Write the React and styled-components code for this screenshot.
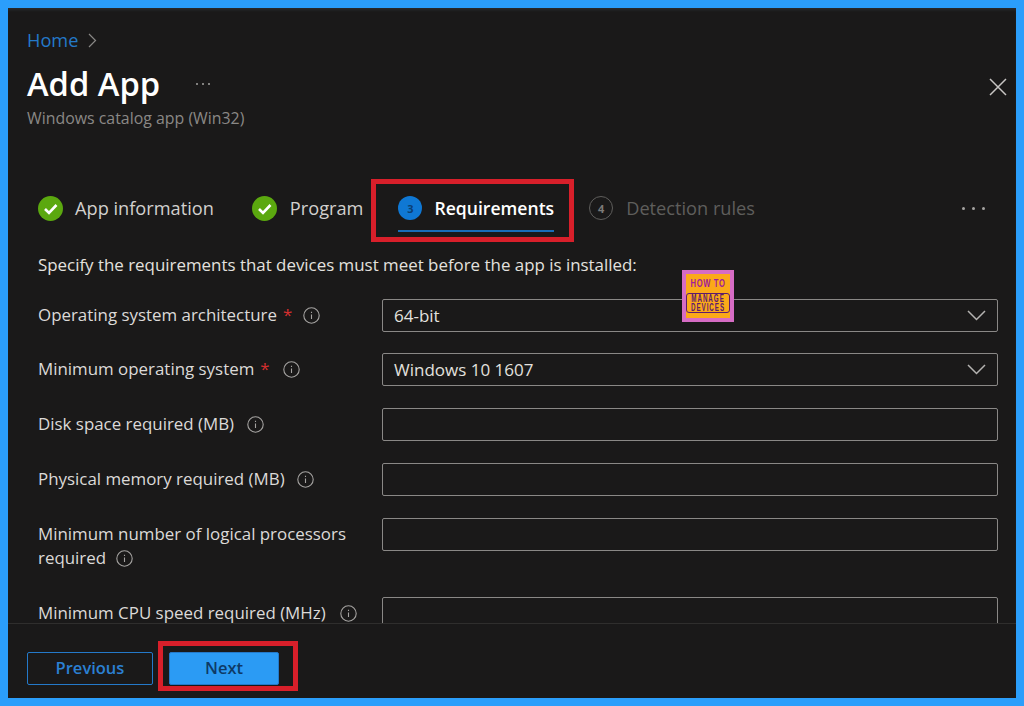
import styled, { createGlobalStyle } from "styled-components";

const GlobalStyle = createGlobalStyle`
  html, body {
    margin: 0;
    padding: 0;
    background: #2b9efb;
  }
  * {
    box-sizing: border-box;
  }
`;

const Frame = styled.div`
  width: 1024px;
  height: 706px;
  padding: 8px;
  background: #2b9efb;
  font-family: "Open Sans", "Noto Sans", sans-serif;
`;

const Panel = styled.div`
  position: relative;
  display: flex;
  flex-direction: column;
  height: 100%;
  background: #1a1919;
  box-shadow: inset 0 3px 3px -1px #2a2c2e;
  overflow: hidden;
`;

const Header = styled.header`
  position: relative;
  padding: 19px 19px 0;
`;

const Crumb = styled.div`
  display: flex;
  align-items: center;
  gap: 10px;
  height: 26px;
  font-size: 18.2px;
  color: #2479c9;
`;

const TitleRow = styled.div`
  display: flex;
  align-items: center;
  gap: 36px;
  margin-top: 8px;
  height: 46px;
`;

const Title = styled.h1`
  margin: 0;
  font-size: 32.7px;
  font-weight: 600;
  color: #fff;
  line-height: 46px;
`;

const Dots = styled.span`
  display: flex;
  gap: ${(props) => props.$gap}px;
`;

const Dot = styled.i`
  display: block;
  width: ${(props) => props.$size}px;
  height: ${(props) => props.$size}px;
  border-radius: 50%;
  background: #a5a3a1;
`;

const Subtitle = styled.div`
  font-size: 15.9px;
  line-height: 20px;
  margin-top: 1px;
  color: #8a8886;
`;

const CloseButton = styled.button`
  position: absolute;
  top: 70px;
  right: 9px;
  display: flex;
  padding: 0;
  border: 0;
  background: none;
`;

const Tabs = styled.nav`
  display: flex;
  align-items: flex-start;
  height: 57px;
  margin-top: 67px;
  padding: 0 31px 0 30px;
`;

const Tab = styled.div`
  position: relative;
  display: flex;
  align-items: center;
  gap: ${(props) => props.$gap}px;
  height: 26px;
  margin-right: ${(props) => props.$after}px;
  font-size: ${(props) => (props.$active ? 17.6 : 18.2)}px;
  font-weight: ${(props) => (props.$active ? 600 : 400)};
  color: ${(props) => props.$color};
  white-space: nowrap;
`;

const Underline = styled.span`
  position: absolute;
  left: 0;
  right: 0;
  bottom: -11px;
  height: 2px;
  background: #1a6db8;
`;

const Callout = styled.span`
  position: absolute;
  border: 5px solid #d81f2a;
  top: ${(props) => props.$top}px;
  left: ${(props) => props.$left}px;
  width: ${(props) => props.$width}px;
  height: ${(props) => props.$height}px;
  pointer-events: none;
`;

const StepBadge = styled.span`
  display: flex;
  align-items: center;
  justify-content: center;
  width: 24px;
  height: 24px;
  border-radius: 50%;
  font-size: 11px;
  font-weight: 700;
  background: ${(props) => (props.$current ? "#0f78d4" : "transparent")};
  border: ${(props) => (props.$current ? "0" : "1.5px solid #5f5e5c")};
  color: ${(props) => (props.$current ? "#0b3f73" : "#7d7b79")};
`;

const MoreTabs = styled.div`
  margin-left: auto;
  display: flex;
  height: 26px;
  align-items: center;
`;

const Body = styled.main`
  position: relative;
  flex: 1;
  min-height: 0;
  overflow: hidden;
  padding: 0 18px 0 30px;
`;

const Intro = styled.p`
  margin: 0 0 21px;
  height: 26px;
  font-size: 16.9px;
  line-height: 26px;
  color: #e3e1df;
  white-space: nowrap;
`;

const Row = styled.div`
  display: grid;
  grid-template-columns: 344px 1fr;
  min-height: 33px;
  margin-bottom: ${(props) => props.$gap}px;
`;

const Label = styled.label`
  font-size: 16.9px;
  line-height: ${(props) => (props.$tall ? 24 : 20)}px;
  padding-top: ${(props) => (props.$tall ? 4 : 6)}px;
  color: #dcdad8;
`;

const Star = styled.span`
  color: #d32f2f;
  margin-left: 6px;
`;

const InfoIcon = styled.svg`
  width: 17px;
  height: 17px;
  margin-left: ${(props) => props.$offset}px;
  vertical-align: -3px;
`;

const Field = styled.div`
  display: flex;
  align-items: center;
  justify-content: space-between;
  height: 33px;
  padding: 0 11px;
  border: 1px solid #8a8886;
  border-radius: 2px;
  font-size: 17px;
  color: #e3e1df;
`;

const Footer = styled.footer`
  position: relative;
  display: flex;
  gap: 16px;
  height: 75px;
  padding: 28px 19px 0;
  border-top: 1px solid #2f2e2d;
  background: #1a1919;
`;

const Button = styled.button`
  position: relative;
  width: ${(props) => props.$width}px;
  height: 33px;
  padding: 0 0 2px;
  border-radius: 2px;
  font-family: inherit;
  font-size: 16.5px;
  font-weight: 600;
  border: 1px solid #2479c9;
  background: ${(props) => (props.$primary ? "#2b9bf4" : "transparent")};
  color: ${(props) => (props.$primary ? "#0e3a66" : "#2b80d3")};
`;

const Badge = styled.div`
  position: absolute;
  top: 262px;
  left: 674px;
  width: 52px;
  height: 52px;
  padding-top: 3px;
  border: 4px solid #d66cc4;
  background: #fba919;
  font-family: "Liberation Sans", sans-serif;
  color: #a01c9b;
  white-space: nowrap;
`;

const BadgeTop = styled.div`
  display: flex;
  justify-content: center;
  font-size: 11.5px;
  font-weight: 700;
  line-height: 12px;
  letter-spacing: 1px;
  transform: scaleX(0.66);
`;

const BadgeBottom = styled.div`
  height: 20px;
  margin-top: 4px;
  border: 1px solid #5d1a6e;
  border-radius: 3px;
  font-size: 10px;
  font-weight: 700;
  line-height: 9px;
  letter-spacing: 1.6px;
  color: #5d1a6e;
`;

const BadgeLine = styled.div`
  display: flex;
  justify-content: center;
  transform: scaleX(0.62);
`;

const CheckBadge = () => (
  <svg width="25" height="25" viewBox="0 0 25 25">
    <circle cx="12.5" cy="12.5" r="12.5" fill="#5ba80f" />
    <path d="M7 13l4 4 7.5-8" fill="none" stroke="#fff" strokeWidth="2.6" />
  </svg>
);

const Info = ({ offset }) => (
  <InfoIcon $offset={offset} viewBox="0 0 17 17">
    <circle cx="8.5" cy="8.5" r="7.7" fill="none" stroke="#a5a3a1" strokeWidth="1.1" />
    <path d="M8.5 7.5v4.6M8.5 4.7v1.2" stroke="#a5a3a1" strokeWidth="1.1" />
  </InfoIcon>
);

const Chevron = () => (
  <svg width="19" height="11" viewBox="0 0 19 11">
    <path d="M1 1l8.5 8.5L18 1" fill="none" stroke="#b5b3b1" strokeWidth="1.5" />
  </svg>
);

const rows = [
  { label: "Operating system architecture", required: true, info: 11, value: "64-bit", select: true, gap: 21 },
  { label: "Minimum operating system", required: true, info: 13, value: "Windows 10 1607", select: true, gap: 22 },
  { label: "Disk space required (MB)", info: 13, gap: 22 },
  { label: "Physical memory required (MB)", info: 12, gap: 22 },
  { label: "Minimum number of logical processors required", info: 10, tall: true, gap: 27 },
  { label: "Minimum CPU speed required (MHz)", info: 14, gap: 0 },
];

export default function App() {
  return (
    <>
      <GlobalStyle />
      <Frame>
        <Panel>
          <Header>
            <Crumb>
              Home
              <svg width="9" height="15" viewBox="0 0 9 15">
                <path d="M1 1l6.5 6.5L1 14" fill="none" stroke="#8a8886" strokeWidth="1.2" />
              </svg>
            </Crumb>
            <TitleRow>
              <Title>Add App</Title>
              <Dots $gap={4}>
                <Dot $size={2} />
                <Dot $size={2} />
                <Dot $size={2} />
              </Dots>
            </TitleRow>
            <Subtitle>Windows catalog app (Win32)</Subtitle>
            <CloseButton aria-label="Close">
              <svg width="18" height="18" viewBox="0 0 18 18">
                <path d="M1 1l16 16M17 1L1 17" stroke="#c8c6c4" strokeWidth="1.5" />
              </svg>
            </CloseButton>
          </Header>
          <Tabs>
            <Tab $gap={12} $after={38} $color="#d2d0ce">
              <CheckBadge />
              App information
            </Tab>
            <Tab $gap={13} $after={35} $color="#d2d0ce">
              <CheckBadge />
              Program
            </Tab>
            <Tab $gap={12} $after={35} $color="#fff" $active>
              <StepBadge $current>3</StepBadge>
              Requirements
              <Underline />
              <Callout $top={-16} $left={-27} $width={203} $height={63} />
            </Tab>
            <Tab $gap={13} $after={0} $color="#5f5e5c">
              <StepBadge>4</StepBadge>
              Detection rules
            </Tab>
            <MoreTabs>
              <Dots $gap={7}>
                <Dot $size={3} />
                <Dot $size={3} />
                <Dot $size={3} />
              </Dots>
            </MoreTabs>
          </Tabs>
          <Body>
            <Intro>Specify the requirements that devices must meet before the app is installed:</Intro>
            {rows.map((row) => (
              <Row key={row.label} $gap={row.gap}>
                <Label $tall={row.tall}>
                  {row.label}
                  {row.required && <Star>*</Star>}
                  <Info offset={row.info} />
                </Label>
                <Field>
                  {row.value}
                  {row.select && <Chevron />}
                </Field>
              </Row>
            ))}
          </Body>
          <Footer>
            <Button $width={126}>Previous</Button>
            <Button $width={110} $primary>
              Next
              <Callout $top={-12} $left={-12} $width={140} $height={50} />
            </Button>
          </Footer>
          <Badge>
            <BadgeTop>HOW TO</BadgeTop>
            <BadgeBottom>
              <BadgeLine>MANAGE</BadgeLine>
              <BadgeLine>DEVICES</BadgeLine>
            </BadgeBottom>
          </Badge>
        </Panel>
      </Frame>
    </>
  );
}
